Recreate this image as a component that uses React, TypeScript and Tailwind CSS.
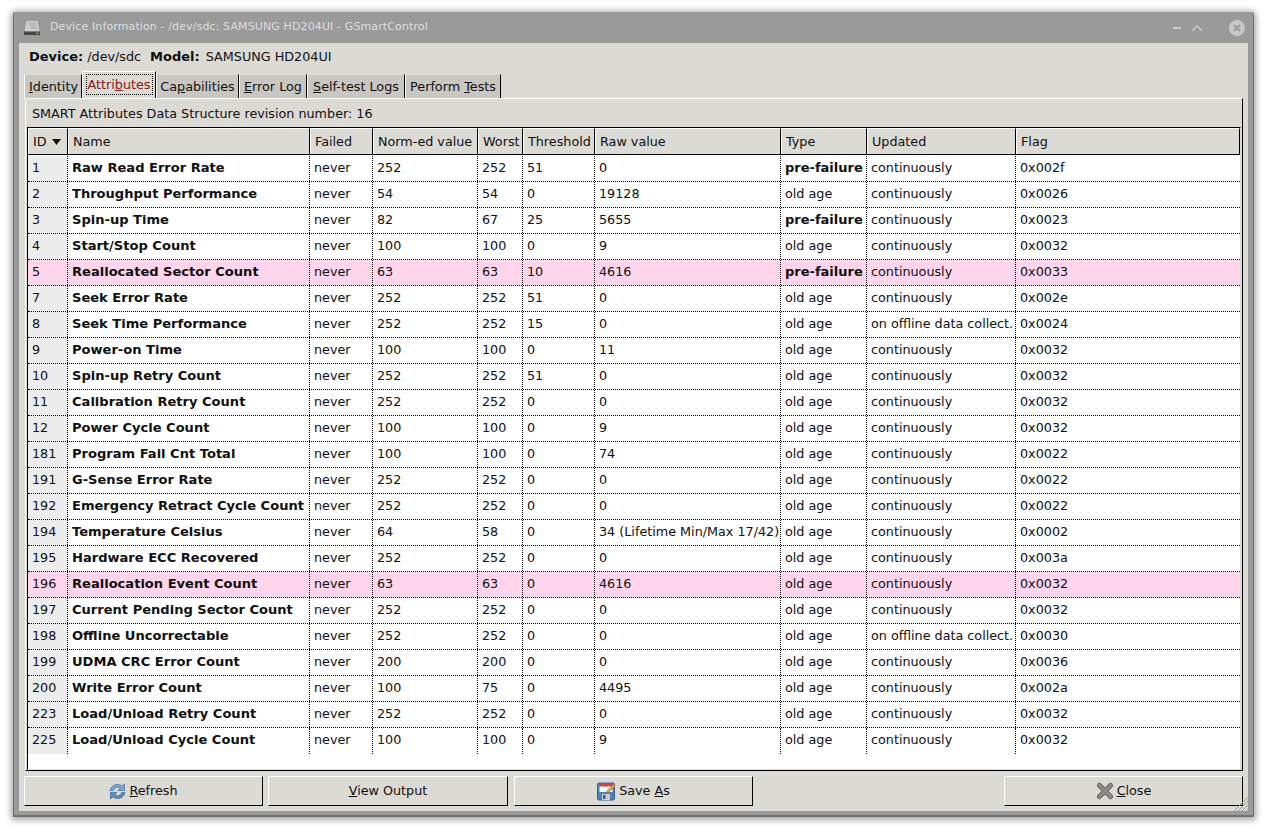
const rows: [string, string, string, string, string, string, string, string, string][] = [
  ["1", "Raw Read Error Rate", "252", "252", "51", "0", "pre-failure", "continuously", "0x002f"],
  ["2", "Throughput Performance", "54", "54", "0", "19128", "old age", "continuously", "0x0026"],
  ["3", "Spin-up Time", "82", "67", "25", "5655", "pre-failure", "continuously", "0x0023"],
  ["4", "Start/Stop Count", "100", "100", "0", "9", "old age", "continuously", "0x0032"],
  ["5", "Reallocated Sector Count", "63", "63", "10", "4616", "pre-failure", "continuously", "0x0033"],
  ["7", "Seek Error Rate", "252", "252", "51", "0", "old age", "continuously", "0x002e"],
  ["8", "Seek Time Performance", "252", "252", "15", "0", "old age", "on offline data collect.", "0x0024"],
  ["9", "Power-on Time", "100", "100", "0", "11", "old age", "continuously", "0x0032"],
  ["10", "Spin-up Retry Count", "252", "252", "51", "0", "old age", "continuously", "0x0032"],
  ["11", "Calibration Retry Count", "252", "252", "0", "0", "old age", "continuously", "0x0032"],
  ["12", "Power Cycle Count", "100", "100", "0", "9", "old age", "continuously", "0x0032"],
  ["181", "Program Fail Cnt Total", "100", "100", "0", "74", "old age", "continuously", "0x0022"],
  ["191", "G-Sense Error Rate", "252", "252", "0", "0", "old age", "continuously", "0x0022"],
  ["192", "Emergency Retract Cycle Count", "252", "252", "0", "0", "old age", "continuously", "0x0022"],
  ["194", "Temperature Celsius", "64", "58", "0", "34 (Lifetime Min/Max 17/42)", "old age", "continuously", "0x0002"],
  ["195", "Hardware ECC Recovered", "252", "252", "0", "0", "old age", "continuously", "0x003a"],
  ["196", "Reallocation Event Count", "63", "63", "0", "4616", "old age", "continuously", "0x0032"],
  ["197", "Current Pending Sector Count", "252", "252", "0", "0", "old age", "continuously", "0x0032"],
  ["198", "Offline Uncorrectable", "252", "252", "0", "0", "old age", "on offline data collect.", "0x0030"],
  ["199", "UDMA CRC Error Count", "200", "200", "0", "0", "old age", "continuously", "0x0036"],
  ["200", "Write Error Count", "100", "75", "0", "4495", "old age", "continuously", "0x002a"],
  ["223", "Load/Unload Retry Count", "252", "252", "0", "0", "old age", "continuously", "0x0032"],
  ["225", "Load/Unload Cycle Count", "100", "100", "0", "9", "old age", "continuously", "0x0032"],
];

const headers = ["Name", "Failed", "Norm-ed value", "Worst", "Threshold", "Raw value", "Type", "Updated", "Flag"];
const gridCols = "grid grid-cols-[40px_242px_63px_105px_45px_72px_186px_86px_149px_224px]";
const cell = "border-r border-dotted border-r-black pl-1 pb-[2px] flex items-center whitespace-nowrap overflow-hidden";
const headCell = "border-t border-l border-t-white border-l-white border-r border-r-black pl-1 flex items-center whitespace-nowrap";

function DiskIcon() {
  return (
    <svg width="18" height="18" viewBox="0 0 18 18">
      <path d="M3.500 2h11l2 10.500H1.500z" fill="#cfcfcf" />
      <path d="M5 3h8l1.500 8-7-1z" fill="#bcbcbc" />
      <rect x="1" y="12.500" width="16" height="3.500" fill="#474747" />
      <rect x="13.500" y="13.500" width="2" height="1.500" fill="#7fae6a" />
    </svg>
  );
}

function RefreshIcon() {
  return (
    <svg width="17" height="17" viewBox="0 0 17 17">
      <path d="M1 7.500C2 3.500 5 1.500 8.500 1.500c2 0 3.500.7 4.500 1.700L15.500 1v6.500H9l2.200-2.200C10.500 4.700 9.500 4.300 8.500 4.300 6.500 4.300 5 5.500 4.300 7.500z" fill="#7ea6d3" stroke="#3f6fa8" strokeWidth="0.700" />
      <path d="M16 9.500c-1 4-4 6-7.500 6-2 0-3.500-.7-4.500-1.700L1.500 16V9.500H8l-2.200 2.200c.7.600 1.700 1 2.700 1 2 0 3.500-1.200 4.200-3.200z" fill="#5b8cc2" stroke="#3a659c" strokeWidth="0.700" />
    </svg>
  );
}

function SaveIcon() {
  return (
    <svg width="19" height="19" viewBox="0 0 19 19">
      <rect x="0.500" y="1" width="17" height="17" rx="1.500" fill="#4f81bd" stroke="#365f91" />
      <rect x="2.500" y="1.500" width="13" height="3" fill="#d9413a" />
      <rect x="2.500" y="4.500" width="13" height="5.500" fill="#f4f4f4" />
      <rect x="5" y="12" width="8" height="6" fill="#c9ced6" />
      <rect x="6" y="13" width="2.500" height="4" fill="#4d5f78" />
      <path d="M10 9l7-7 1.500 1.500-7 7-2.200.700z" fill="#e8a33d" stroke="#8a5a1c" strokeWidth="0.500" />
    </svg>
  );
}

function CloseIcon() {
  return (
    <svg width="18" height="18" viewBox="0 0 18 18">
      <path d="M3.500 3.500L14.500 14.500M14.500 3.500L3.500 14.500" stroke="#5f5f5c" strokeWidth="5" strokeLinecap="round" />
      <path d="M3.500 3.500L14.500 14.500M14.500 3.500L3.500 14.500" stroke="#8a8a86" strokeWidth="3.400" strokeLinecap="round" />
    </svg>
  );
}

function Button({ w, icon, children }: { w: string; icon?: React.ReactNode; children: React.ReactNode }) {
  return (
    <button className={`${w} h-[30px] flex items-center justify-center gap-[3px] bg-[#dcdad5] border border-t-white border-l-white border-r-black border-b-black text-[12.750px] text-[#101010]`}>
      {icon}
      <span>{children}</span>
    </button>
  );
}

function Tab({ w, children }: { w: string; children: React.ReactNode }) {
  return (
    <div className={`${w} h-6 bg-[#c9c7c2] border-t border-t-[#dcdad5] border-l border-l-white border-r border-r-black flex items-center justify-center whitespace-nowrap`}>
      {children}
    </div>
  );
}

export default function App() {
  return (
    <div className="w-[1267px] h-[830px] bg-white pt-3 pl-[13px] font-['DejaVu_Sans',sans-serif] text-[12.750px] text-[#101010] overflow-hidden">
      <div className="relative w-[1241px] h-[805px] bg-[#9a9a9a] rounded-t-[3px] border-x border-b-2 border-[#707070] shadow-[0_1px_6px_2px_rgba(0,0,0,0.35)] flex flex-col">
        {/* title bar */}
        <div className="h-[31px] flex items-center pl-[9px] pr-[8px] shrink-0">
          <DiskIcon />
          <span className="ml-[9px] text-[#dedede] text-[11px] tracking-[0.120px]">Device Information - /dev/sdc: SAMSUNG HD204UI - GSmartControl</span>
          <div className="ml-auto flex items-center">
            <svg width="12" height="12" viewBox="0 0 12 12" className="mr-2">
              <rect x="2" y="5" width="8" height="2" fill="#c8c8c8" />
            </svg>
            <svg width="12" height="12" viewBox="0 0 12 12" className="mr-[26px]">
              <path d="M1.500 8.500L6 4l4.500 4.500" fill="none" stroke="#c8c8c8" strokeWidth="1.600" />
            </svg>
            <svg width="16" height="16" viewBox="0 0 16 16">
              <circle cx="8" cy="8" r="8" fill="#c8c8c8" />
              <path d="M5 5l6 6M11 5l-6 6" stroke="#9a9a9a" strokeWidth="2.200" />
            </svg>
          </div>
        </div>

        {/* content */}
        <div className="mx-[5px] h-[768px] bg-[#dcdad5] flex flex-col shrink-0 relative">
          <div className="h-[27px] pl-[10px] flex items-center whitespace-nowrap shrink-0">
            <b className="text-[13px]">Device:</b>
            <span className="ml-1">/dev/sdc</span>
            <b className="ml-[9px] text-[13px]">Model:</b>
            <span className="ml-[6px]">SAMSUNG HD204UI</span>
          </div>

          {/* tabs */}
          <div className="h-[28px] pl-[5px] flex items-end shrink-0">
            <Tab w="w-[58px] pl-px"><span><u>I</u>dentity</span></Tab>
            <div className="w-[74px] h-[27px] bg-[#dcdad5] border-t border-l border-t-white border-l-white border-r border-r-black flex items-start justify-center pt-[2px]">
              <span className="border border-dotted border-black w-[67px] justify-center h-[21px] flex items-center text-[#8b1a1a] whitespace-nowrap">
                <span>Attri<u>b</u>utes</span>
              </span>
            </div>
            <Tab w="w-[83px]"><span>Ca<u>p</u>abilities</span></Tab>
            <Tab w="w-[68px]"><span><u>E</u>rror Log</span></Tab>
            <Tab w="w-[98px]"><span><u>S</u>elf-test Logs</span></Tab>
            <Tab w="w-[96px]"><span>Perform <u>T</u>ests</span></Tab>
          </div>

          {/* tab panel */}
          <div className="ml-[6px] w-[1218px] h-[673px] border-t border-t-white border-l border-l-white border-r border-r-black border-b border-b-black flex flex-col shrink-0">
            <div className="h-[28px] pl-[6px] pt-[2px] flex items-center shrink-0">SMART Attributes Data Structure revision number: 16</div>
            <div className="ml-[1px] w-[1214px] flex-1 bg-white border border-black border-r-[#dcdad5] border-b-[#dcdad5] flex flex-col">
              {/* header */}
              <div className={`${gridCols} h-[27px] bg-[#dcdad5] border-b border-b-black shrink-0`}>
                <div className={`${headCell} gap-[5px]`}>
                  ID
                  <svg width="9" height="6" viewBox="0 0 9 6"><path d="M0 0h9L4.500 6z" fill="#101010" /></svg>
                </div>
                {headers.map((h) => (
                  <div key={h} className={headCell}>{h}</div>
                ))}
              </div>
              {/* rows */}
              <div className="pt-px">
                {rows.map((r, i) => {
                  const pink = r[0] === "5" || r[0] === "196";
                  const border = i < rows.length - 1 ? "border-b border-dotted border-b-black" : "";
                  return (
                    <div key={r[0]} className={`${gridCols} h-[26px] ${border} ${pink ? "bg-[#ffd5ec]" : ""}`}>
                      <div className={`${cell} ${pink ? "" : "bg-[#ececec]"}`}>{r[0]}</div>
                      <div className={`${cell} font-bold text-[13.050px]`}>{r[1]}</div>
                      <div className={cell}>never</div>
                      <div className={cell}>{r[2]}</div>
                      <div className={cell}>{r[3]}</div>
                      <div className={cell}>{r[4]}</div>
                      <div className={cell}>{r[5]}</div>
                      <div className={`${cell} ${r[6] === "pre-failure" ? "font-bold text-[13px]" : ""}`}>{r[6]}</div>
                      <div className={cell}>{r[7]}</div>
                      <div className="pl-1 pb-[2px] flex items-center">{r[8]}</div>
                    </div>
                  );
                })}
              </div>
            </div>
          </div>

          {/* buttons */}
          <div className="mt-[5px] pl-[5px] flex shrink-0">
            <Button w="w-[239px]" icon={<RefreshIcon />}><u>R</u>efresh</Button>
            <div className="w-[5px]" />
            <Button w="w-[240px]"><u>V</u>iew Output</Button>
            <div className="w-[6px]" />
            <Button w="w-[239px]" icon={<SaveIcon />}>Save <u>A</u>s</Button>
            <div className="w-[251px]" />
            <Button w="w-[239px]" icon={<CloseIcon />}><u>C</u>lose</Button>
          </div>

          {/* resize grip */}
          <svg width="15" height="15" viewBox="0 0 15 15" className="absolute right-0 bottom-0">
            <path d="M15 1L1 15M15 5L5 15M15 9L9 15M15 13L13 15" stroke="#9a9a9a" strokeWidth="1" />
          </svg>
        </div>
      </div>
    </div>
  );
}
